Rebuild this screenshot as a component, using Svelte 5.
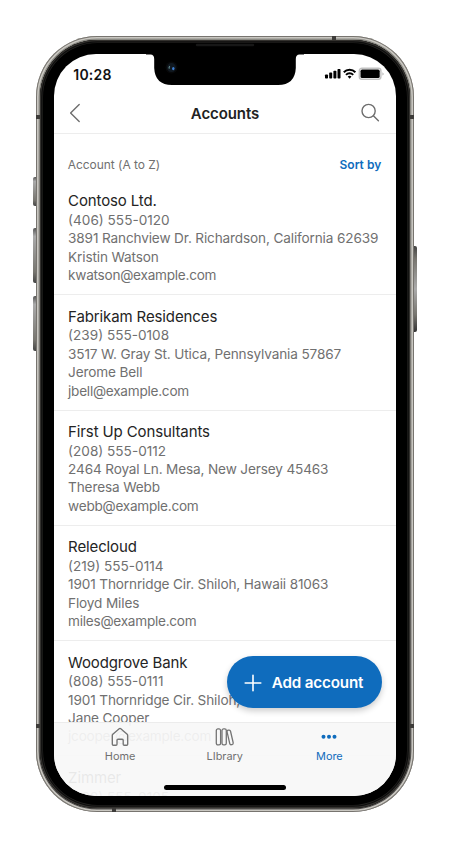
<script>
  const accounts = [
    { name: 'Contoso Ltd.', phone: '(406) 555-0120', address: '3891 Ranchview Dr. Richardson, California 62639', contact: 'Kristin Watson', email: 'kwatson@example.com' },
    { name: 'Fabrikam Residences', phone: '(239) 555-0108', address: '3517 W. Gray St. Utica, Pennsylvania 57867', contact: 'Jerome Bell', email: 'jbell@example.com' },
    { name: 'First Up Consultants', phone: '(208) 555-0112', address: '2464 Royal Ln. Mesa, New Jersey 45463', contact: 'Theresa Webb', email: 'webb@example.com' },
    { name: 'Relecloud', phone: '(219) 555-0114', address: '1901 Thornridge Cir. Shiloh, Hawaii 81063', contact: 'Floyd Miles', email: 'miles@example.com' },
    { name: 'Woodgrove Bank', phone: '(808) 555-0111', address: '1901 Thornridge Cir. Shiloh, Hawaii 81063', contact: 'Jane Cooper', email: 'jcooper@example.com' },
    { name: 'Zimmer', phone: '(302) 555-0105' }
  ];
</script>

<main class="stage">
  <div class="phone">
    <i class="key mute"></i><i class="key up"></i><i class="key down"></i><i class="key power"></i>
    <div class="rim">
      <div class="bezel">
        <div class="screen">
          <header class="status">
            <span class="time">10:28</span>
            <svg class="signals" width="61" height="14" viewBox="0 0 61 14">
              <g fill="#000">
                <rect x="1" y="7.4" width="3" height="4.2" rx=".8" />
                <rect x="5.2" y="5.6" width="3" height="6" rx=".8" />
                <rect x="9.4" y="3.8" width="3" height="7.8" rx=".8" />
                <rect x="13.5" y="2" width="3" height="9.6" rx=".8" />
              </g>
              <g fill="none" stroke="#000" stroke-width="2">
                <path d="M19.8 5.2a8.2 8.2 0 0 1 11.6 0" />
                <path d="M22 7.9a5 5 0 0 1 7.2 0" />
              </g>
              <path d="M23.7 9.6a2.8 2.8 0 0 1 3.8 0l-1.9 2.1z" fill="#000" />
              <rect x="35.3" y="1.3" width="21.6" height="11" rx="2.6" fill="#fff" stroke="#c2c2c2" stroke-width="1.4" />
              <rect x="36.5" y="2.6" width="19.2" height="8.4" rx="1.6" fill="#000" />
              <path d="M58.5 5.2c1.4.6 1.4 2.8 0 3.4z" fill="#aaa" />
            </svg>
          </header>

          <nav class="titlebar">
            <svg width="12" height="20" viewBox="0 0 12 20" fill="none" stroke="#6e6e6e" stroke-width="1.4" stroke-linecap="round" stroke-linejoin="round"><path d="M10.2 1.4 1.6 10l8.6 8.6" /></svg>
            <h1>Accounts</h1>
            <svg width="20" height="20" viewBox="0 0 20 20" fill="none" stroke="#6e6e6e" stroke-width="1.4" stroke-linecap="round"><circle cx="8.6" cy="8" r="6.6" /><path d="m13.4 12.8 5 5" /></svg>
          </nav>

          <div class="sortrow">
            <span>Account (A to Z)</span>
            <button>Sort by</button>
          </div>

          <ul class="accounts">
            {#each accounts as a}
              <li>
                <h2>{a.name}</h2>
                <p class="phone-no">{a.phone}</p>
                {#if a.address}
                  <p>{a.address}</p>
                  <p>{a.contact}</p>
                  <p class="mail">{a.email}</p>
                {/if}
              </li>
            {/each}
          </ul>

          <button class="add">
            <svg width="18" height="18" viewBox="0 0 18 18" stroke="#fff" stroke-width="1.6" stroke-linecap="round"><path d="M9 1.2v15.6M1.2 9h15.6" /></svg>
            <span>Add account</span>
          </button>

          <footer class="tabs">
            <div class="tab">
              <svg width="20" height="20" viewBox="0 0 20 20" fill="none" stroke="#747474" stroke-width="1.35" stroke-linejoin="round"><path d="M2.3 8.4q0-.7.5-1.2L9.2 1.7q.8-.7 1.6 0l6.4 5.5q.5.5.5 1.2v8.8q0 1-1 1h-2.5q-1 0-1-1v-4q0-1-1-1H8q-1 0-1 1v4q0 1-1 1H3.3q-1 0-1-1z" /></svg>
              <span>Home</span>
            </div>
            <div class="tab">
              <svg width="20" height="20" viewBox="0 0 20 20" fill="none" stroke="#747474" stroke-width="1.3"><rect x="1.3" y="1.9" width="4.3" height="16" rx="1.6" /><rect x="7" y="1.9" width="4.3" height="16" rx="1.6" /><rect x="13.4" y="3" width="3.5" height="14.8" rx="1.5" transform="rotate(-13 15.1 10.4)" /></svg>
              <span>LIbrary</span>
            </div>
            <div class="tab active">
              <svg width="20" height="20" viewBox="0 0 20 20" fill="#0f6cbd"><circle cx="4.5" cy="9.8" r="2" /><circle cx="10" cy="9.8" r="2" /><circle cx="15.5" cy="9.8" r="2" /></svg>
              <span>More</span>
            </div>
          </footer>
          <i class="homebar"></i>
        </div>
        <svg class="notch" width="158" height="44" viewBox="0 0 158 44">
          <path d="M0 11.4h4.5q3.7 0 3.7 4.5v9q.8 17 17.8 17h106q17 0 17.8-17v-9q0-4.5 3.7-4.5h4.5V0H0z" />
          <path d="M51 2h56" stroke="#171717" stroke-width="2.4" stroke-linecap="round" />
          <circle cx="25.5" cy="24.6" r="6" fill="#070809" />
          <circle cx="25.5" cy="24.6" r="4.5" fill="#101820" />
          <path d="M23.8 23.1q-1.2 1.2-.4 2.5" stroke="#668b8c" fill="none" stroke-width="1.2" />
          <ellipse cx="27.3" cy="25.6" rx="1.2" ry="1.7" fill="#3c7ed2" />
        </svg>
      </div>
    </div>
    <i class="band tl"></i><i class="band tr"></i><i class="band bl"></i><i class="band br"></i><i class="band top"></i><i class="band bottom"></i>
  </div>
</main>

<style>
  :global(body) { background: #fff; }
  * { box-sizing: border-box; }
  .stage { height: 849px; padding: 36px 0 0 36px; overflow: hidden; font-family: Inter, "Liberation Sans", sans-serif; }
  h1, h2, p, ul { margin: 0; padding: 0; font-weight: 400; }
  button { border: 0; padding: 0; background: none; font-family: inherit; }
  .phone { position: relative; width: 377.5px; height: 776px; }
  .rim { position: relative; height: 100%; border-radius: 61px; padding: 3.6px; background: linear-gradient(#8b8a84, #777570 50%, #4d4b49); box-shadow: inset 0 0 0 1px #77746f, inset 0 0 0 2.6px #c9c7c1; }
  .bezel { position: relative; height: 100%; border-radius: 57.4px; padding: 14.4px 14.2px; background: #000; box-shadow: inset 0 0 0 1.2px #34322f, inset 0 0 0 2.4px #0c0c0c, inset 0 0 0 3px #242321; }
  .screen { position: relative; display: flex; flex-direction: column; height: 742px; border-radius: 42px; background: #fff; overflow: hidden; }
  .status { display: flex; flex: none; justify-content: space-between; align-items: flex-start; height: 39px; padding: 13px 10.5px 0 19.5px; }
  .time { font-size: 14px; font-weight: 600; line-height: 15px; letter-spacing: .2px; color: #111; }
  .titlebar { display: flex; flex: none; justify-content: space-between; align-items: center; height: 41px; padding: 1px 15.5px 0 15px; border-bottom: 1px solid #ededed; }
  .titlebar h1 { padding: 1px 0 0 9px; font-size: 15px; font-weight: 600; letter-spacing: -.08px; color: #222; }
  .sortrow { display: flex; flex: none; justify-content: space-between; align-items: center; height: 61px; padding: 1px 14.5px 0 14px; font-size: 12px; letter-spacing: -.05px; color: #707070; }
  .sortrow button { font-size: 12px; font-weight: 600; color: #0f6cbd; }
  .accounts { flex: 1; min-height: 0; list-style: none; overflow: hidden; margin-top: -15px; }
  .accounts li { height: 115.3px; padding: 12.5px 0 0 14.3px; border-bottom: 1px solid #ededed; white-space: nowrap; }
  .accounts h2 { font-size: 15px; line-height: 18.6px; letter-spacing: -.12px; color: #242424; }
  .accounts p { font-size: 13.6px; line-height: 18.4px; letter-spacing: -.14px; color: #707070; }
  .accounts .phone-no { letter-spacing: 0; }
  .accounts .mail { letter-spacing: -.25px; }
  .add { position: absolute; right: 14px; bottom: 87.5px; display: flex; align-items: center; gap: 10px; width: 155px; height: 52px; padding: 1px 0 0 17px; border-radius: 26px; background: #0f6cbd; color: #fff; font-size: 15.2px; font-weight: 600; letter-spacing: -.15px; white-space: nowrap; box-shadow: 0 3px 6px rgba(0, 0, 0, .2); }
  .tabs { position: absolute; left: 0; right: 0; bottom: 0; display: flex; height: 74px; padding: 4px 14px 0; border-top: 1px solid #ececec; background: rgba(247, 247, 247, .93); }
  .tab { display: flex; flex: 1; flex-direction: column; align-items: center; font-size: 10.9px; line-height: 18px; color: #707070; }
  .tab.active { color: #0f6cbd; }
  .homebar { position: absolute; left: 110px; bottom: 5.5px; width: 122.5px; height: 5px; border-radius: 3px; background: #000; }
  .notch { position: absolute; left: 106.5px; top: 3px; }
  .key { position: absolute; left: -3px; width: 4px; border-radius: 2px 0 0 2px; background: linear-gradient(#555, #aaa 15%, #77756f 80%, #444); }
  .mute { top: 141px; height: 29px; }
  .up { top: 192px; height: 55px; }
  .down { top: 260px; height: 55px; }
  .power { left: auto; right: -3px; top: 210px; height: 86px; border-radius: 0 2px 2px 0; background: linear-gradient(#444, #77756f 15%, #aaa 50%, #77756f 80%, #333); }
  .band { position: absolute; width: 4px; height: 4px; background: #3d3b39; }
  .tl { left: 0; top: 79px; } .tr { right: 0; top: 79px; }
  .bl { left: 0; bottom: 84px; } .br { right: 0; bottom: 84px; }
  .top { right: 78px; top: 0; } .bottom { left: 76px; bottom: 0; }
</style>
